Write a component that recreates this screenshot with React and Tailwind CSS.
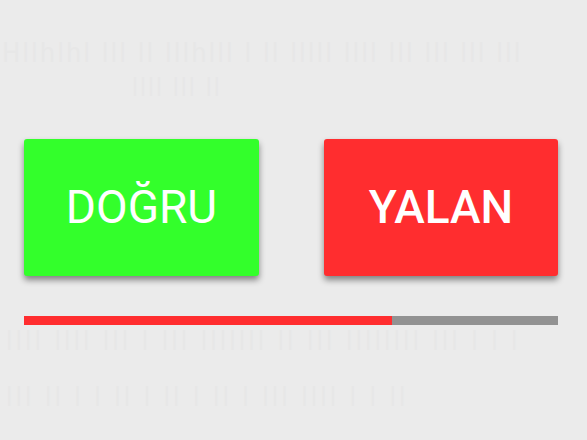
export default function App() {
  const progress = 0.69

  return (
    <div className="w-[587px] h-[440px] bg-[#ebebeb] overflow-hidden flex flex-col" style={{ fontFamily: 'Roboto, "Liberation Sans", sans-serif' }}>
      {/* faded question text behind the buttons */}
      <div className="pt-[38px] px-[2px] text-[#e7e7e7] text-[27px] leading-[30px] tracking-[2px] whitespace-nowrap select-none" style={{ fontFamily: '"DejaVu Sans Condensed", sans-serif' }}>
        <div>Hllhlhl lll ll lllhlll l ll lllll llll lll lll lll lll</div>
        <div className="pl-[130px] text-[24px] leading-[28px] mt-[6px]">llll  lll   ll</div>
      </div>

      <div className="mt-[37px] ml-[24px] w-[534px] flex justify-between">
        <button className="w-[235px] h-[137px] rounded-[3px] bg-[#33ff2b] text-white text-[46px] shadow-[0_4px_6px_rgba(0,0,0,0.45)] flex items-center justify-center">
          DOĞRU
        </button>
        <button className="w-[234px] h-[137px] rounded-[3px] bg-[#ff2d2f] text-white text-[46px] font-medium shadow-[0_4px_6px_rgba(0,0,0,0.45)] flex items-center justify-center">
          YALAN
        </button>
      </div>

      <div className="mt-[40px] ml-[24px] w-[534px] h-[9px] bg-[#929292] flex">
        <div className="h-full bg-[#ff2d2f]" style={{ width: `${progress * 100}%` }} />
      </div>

      <div className="mt-[2px] px-[6px] text-[#e7e7e7] text-[26px] leading-[28px] tracking-[3px] whitespace-nowrap select-none" style={{ fontFamily: '"DejaVu Sans Condensed", sans-serif' }}>
        <div>llll llll lll l lll lllllll ll lll llllllll lll l l l</div>
        <div className="mt-[28px]">lll ll l l ll l ll l ll l  lll llll l l ll</div>
      </div>
    </div>
  )
}
